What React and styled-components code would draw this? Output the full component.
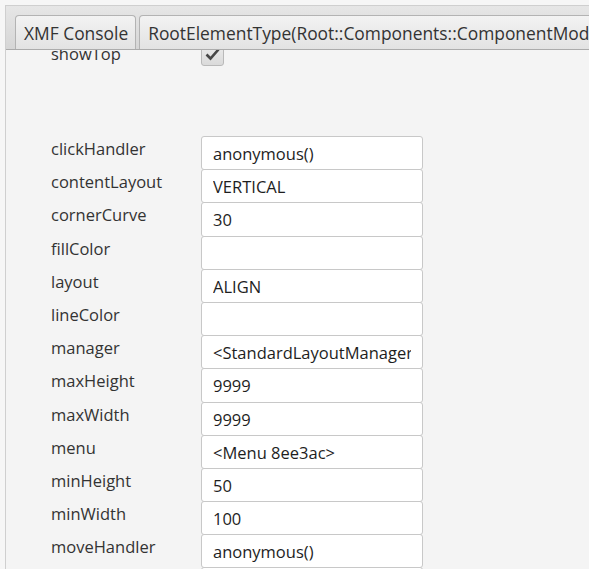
import React from 'react';
import styled, { createGlobalStyle } from 'styled-components';

const GlobalStyle = createGlobalStyle`
  html, body {
    margin: 0;
    padding: 0;
    background: #f4f4f4;
  }
  body {
    font-family: "Open Sans", "Noto Sans", sans-serif;
  }
`;

const Frame = styled.div`
  width: 589px;
  height: 569px;
  overflow: hidden;
  padding: 5px 0 0 5px;
  box-sizing: border-box;
  background: #f6f6f6;
`;

const TabPane = styled.div`
  height: 100%;
  display: flex;
  flex-direction: column;
  border-top: 1px solid #cfcfcf;
  border-left: 1px solid #cfcfcf;
  background: #f4f4f4;
`;

const TabHeader = styled.div`
  height: 44px;
  flex: none;
  display: flex;
  align-items: flex-end;
  gap: 3px;
  padding-left: 9px;
  box-sizing: border-box;
  overflow: hidden;
  background: linear-gradient(#e6e6e6, #d6d6d6);
  border-bottom: 1px solid #ababab;
`;

const Tab = styled.div`
  height: 34px;
  flex: none;
  display: flex;
  align-items: center;
  padding: 0 7px 0 8px;
  box-sizing: border-box;
  white-space: nowrap;
  border: 1px solid #b3b3b3;
  border-bottom: none;
  border-radius: 4px 4px 0 0;
  background: linear-gradient(#f3f3f3, #e2e2e2);
  color: #333;
  font-size: 17.4px;
`;

const Content = styled.div`
  flex: 1;
  overflow: hidden;
`;

const Form = styled.div`
  margin-top: -7px;
  padding-left: 45px;
  display: flex;
  flex-direction: column;
`;

const Row = styled.div`
  display: grid;
  grid-template-columns: 150px 222px;
  height: ${({ check }) => (check ? '23px' : '33.2px')};
  margin-bottom: ${({ check }) => (check ? '70px' : '0')};
`;

const Label = styled.div`
  font-size: 16.5px;
  line-height: 22px;
  padding-top: ${({ top }) => top ?? 2}px;
  color: #333;
`;

const CheckBox = styled.div`
  width: 23px;
  height: 23px;
  box-sizing: border-box;
  border: 1px solid #b9b9b9;
  border-radius: 3px;
  background: linear-gradient(#ececec, #dadada);
  display: flex;
  align-items: center;
  justify-content: center;
`;

const Field = styled.div`
  height: 34.2px;
  box-sizing: border-box;
  border: 1px solid #c8c8c8;
  border-radius: 3px;
  background: #fff;
  padding: 1px 11px 0;
  display: flex;
  align-items: center;
  font-size: 16.5px;
  color: #1e1e1e;
`;

const Value = styled.span`
  flex: 1;
  white-space: nowrap;
  overflow: hidden;
`;

const rows = [
  ['clickHandler', 'anonymous()'],
  ['contentLayout', 'VERTICAL'],
  ['cornerCurve', '30'],
  ['fillColor', ''],
  ['layout', 'ALIGN'],
  ['lineColor', ''],
  ['manager', '<StandardLayoutManager>'],
  ['maxHeight', '9999'],
  ['maxWidth', '9999'],
  ['menu', '<Menu 8ee3ac>'],
  ['minHeight', '50'],
  ['minWidth', '100'],
  ['moveHandler', 'anonymous()'],
  ['name', ''],
];

function Check() {
  return (
    <svg width="15" height="13" viewBox="0 0 15 13">
      <path d="M1.5 6.5 L5.5 10.5 L13.5 1.5" fill="none" stroke="#474747" strokeWidth="2.6" />
    </svg>
  );
}

export default function App() {
  return (
    <Frame>
      <GlobalStyle />
      <TabPane>
        <TabHeader>
          <Tab>XMF Console</Tab>
          <Tab>RootElementType(Root::Components::ComponentModel)</Tab>
        </TabHeader>
        <Content>
          <Form>
            <Row check>
              <Label top={0}>showTop</Label>
              <CheckBox>
                <Check />
              </CheckBox>
            </Row>
            {rows.map(([name, value]) => (
              <Row key={name}>
                <Label>{name}</Label>
                <Field>
                  <Value>{value}</Value>
                </Field>
              </Row>
            ))}
          </Form>
        </Content>
      </TabPane>
    </Frame>
  );
}
